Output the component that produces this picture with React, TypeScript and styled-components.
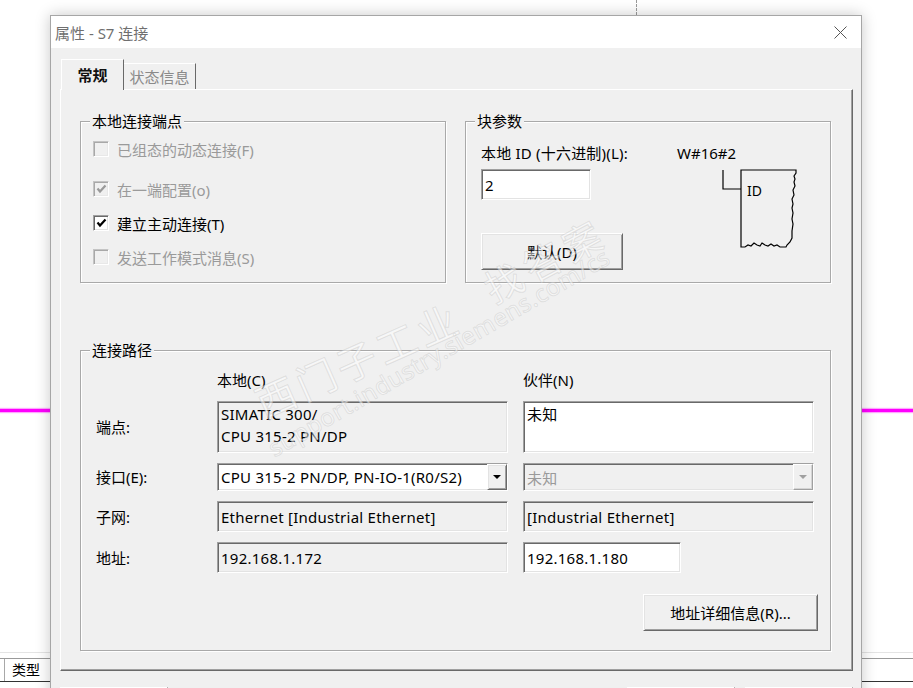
import React from 'react';
import styled, { createGlobalStyle, css } from 'styled-components';

const GlobalStyle = createGlobalStyle`
  html, body { margin: 0; padding: 0; background: #fff; }
  body {
    font-family: "Noto Sans", "Noto Sans CJK SC", sans-serif;
    font-size: 15px;
    color: #000;
  }
  * { box-sizing: border-box; }
`;

// classic win32 3d edges
const sunken = css`
  border: 1px solid;
  border-color: #a0a0a0 #fff #fff #a0a0a0;
  box-shadow: inset 1px 1px 0 #696969, inset -1px -1px 0 #e3e3e3;
`;

const raised = css`
  border: 1px solid;
  border-color: #fff #696969 #696969 #fff;
  box-shadow: inset 1px 1px 0 #e3e3e3, inset -1px -1px 0 #a0a0a0;
`;

const Page = styled.div`
  position: relative;
  width: 913px;
  height: 688px;
  overflow: hidden;
  background: #fff;
`;

/* ---------- what lies behind the dialog ---------- */

const Backdrop = styled.div`
  display: flex;
  flex-direction: column;
`;

const Tick = styled.div`
  margin-left: 636px;
  height: 15px;
  border-left: 1px dashed #9a9a9a;
`;

const Wire = styled.div`
  margin-top: 394px;
  height: 3px;
  background: #ff00ff;
  box-shadow: 0 0 1px 1px rgba(255, 0, 255, 0.35);
`;

const BgTable = styled.div`
  margin-top: 240px;
  border-top: 1px solid #e4e4e4;
`;

const BgHeader = styled.div`
  margin-top: 5px;
  height: 24px;
  border-top: 1px solid #9a9a9a;
  border-bottom: 1px solid #333;
  display: flex;
`;

const BgCell = styled.div`
  margin-left: 4px;
  padding-left: 7px;
  border-left: 1px solid #a8a8a8;
  font-size: 14px;
  line-height: 22px;
`;

/* ---------- dialog window ---------- */

const Dialog = styled.div`
  position: absolute;
  left: 50px;
  top: 15px;
  width: 812px;
  height: 730px;
  background: #f0f0f0;
  border: 1px solid #a6a6a6;
  box-shadow: 0 0 14px rgba(0, 0, 0, 0.22);
  display: flex;
  flex-direction: column;
`;

const TitleBar = styled.div`
  height: 32px;
  background: #fff;
  display: flex;
  align-items: center;
  justify-content: space-between;
  padding: 0 14px 0 4px;
`;

const Title = styled.span`
  color: #6f6f6f;
  font-size: 15px;
`;

const Body = styled.div`
  padding: 11px 8px 0 9px;
  display: flex;
  flex-direction: column;
`;

const Tabs = styled.div`
  display: flex;
  align-items: flex-end;
  height: 30px;
  padding-left: 1px;
`;

const Tab = styled.div<{ $active?: boolean }>`
  position: relative;
  display: flex;
  align-items: center;
  justify-content: center;
  background: #f0f0f0;
  border: 1px solid;
  border-color: #fff #696969 transparent #fff;
  border-bottom: none;
  ${(p) =>
    p.$active
      ? css`
          width: 63px;
          height: 31px;
          margin-bottom: -1px;
          z-index: 1;
          font-weight: 700;
          color: #111;
          padding-bottom: 1px;
        `
      : css`
          width: 73px;
          height: 26px;
          margin-left: -1px;
          color: #8a8a8a;
        `}
`;

const TabPanel = styled.div`
  height: 582px;
  border: 1px solid;
  border-color: #fff #696969 #696969 #fff;
  box-shadow: inset -1px -1px 0 #a0a0a0;
  padding: 31px 21px 0 19px;
  display: flex;
  flex-direction: column;
`;

const TopRow = styled.div`
  display: flex;
  gap: 19px;
`;

const GroupBox = styled.div<{ $w?: number; $h: number; $top?: number }>`
  position: relative;
  width: ${(p) => (p.$w ? `${p.$w}px` : 'auto')};
  height: ${(p) => p.$h}px;
  margin-top: ${(p) => p.$top ?? 0}px;
  border: 1px solid #a9a9a9;
  box-shadow: inset 1px 1px 0 #fff, 1px 1px 0 #fff;
`;

const Legend = styled.span`
  position: absolute;
  top: -11px;
  left: 9px;
  padding: 0 2px;
  background: #f0f0f0;
  line-height: 20px;
`;

/* ---------- local endpoint ---------- */

const CheckList = styled.div`
  display: flex;
  flex-direction: column;
  gap: 14px;
  padding: 17px 0 0 12px;
`;

const CheckRow = styled.label<{ $enabled: boolean; $first?: boolean }>`
  display: flex;
  align-items: center;
  gap: 8px;
  height: 20px;
  color: ${(p) => (p.$enabled ? '#000' : '#9a9a9a')};
  margin-bottom: ${(p) => (p.$first ? 6 : 0)}px;
`;

const Box = styled.span<{ $enabled: boolean }>`
  width: 16px;
  height: 16px;
  flex: none;
  display: flex;
  align-items: center;
  justify-content: center;
  border: 1px solid;
  border-color: ${(p) => (p.$enabled ? '#a0a0a0 #fff #fff #a0a0a0' : '#c4c4c4 #fff #fff #c4c4c4')};
  box-shadow: ${(p) =>
    p.$enabled
      ? 'inset 1px 1px 0 #696969, inset -1px -1px 0 #e3e3e3'
      : 'inset 1px 1px 0 #a8a8a8, inset -1px -1px 0 #e8e8e8'};
  background: ${(p) => (p.$enabled ? '#fff' : '#f0f0f0')};
`;

const Check = ({ color }: { color: string }) => (
  <svg width="11" height="10" viewBox="0 0 11 10">
    <polyline points="1.5,4.5 4,7.5 9.5,1.5" fill="none" stroke={color} strokeWidth="2.2" />
  </svg>
);

/* ---------- block parameters ---------- */

const ParamBody = styled.div`
  padding: 21px 0 0 15px;
  display: flex;
  flex-direction: column;
`;

const ParamHead = styled.div`
  display: flex;
  line-height: 20px;
`;

const ParamLabel = styled.span`
  width: 196px;
  letter-spacing: 0.2px;
`;

const ParamMain = styled.div`
  display: flex;
  margin-top: 6px;
`;

const ParamCol = styled.div`
  display: flex;
  flex-direction: column;
  gap: 33px;
  width: 142px;
`;

const TextInput = styled.div<{ $w: number }>`
  ${sunken};
  width: ${(p) => p.$w}px;
  height: 31px;
  background: #fff;
  display: flex;
  align-items: center;
  padding-left: 3px;
`;

const Button = styled.div<{ $w: number; $h: number }>`
  ${raised};
  width: ${(p) => p.$w}px;
  height: ${(p) => p.$h}px;
  background: #f0f0f0;
  display: flex;
  align-items: center;
  justify-content: center;
  flex: none;
`;

const Diagram = styled.svg`
  margin: -1px 0 0 97px;
`;

/* ---------- connection path ---------- */

const PathGrid = styled.div`
  display: grid;
  grid-template-columns: 106px 291px 291px;
  grid-template-rows: 21px 52px 28px 31px 31px;
  column-gap: 15px;
  row-gap: 10px;
  padding: 19px 0 0 15px;
  align-items: center;
`;

const ColHead = styled.span`
  line-height: 21px;
`;

const RowLabel = styled.span`
  line-height: 20px;
`;

const Field = styled.div<{ $white?: boolean; $muted?: boolean; $w?: number }>`
  ${sunken};
  height: 100%;
  width: ${(p) => (p.$w ? `${p.$w}px` : 'auto')};
  background: ${(p) => (p.$white ? '#fff' : '#f0f0f0')};
  color: ${(p) => (p.$muted ? '#9a9a9a' : '#000')};
  display: flex;
  align-items: center;
  padding-left: 3px;
  white-space: nowrap;
  letter-spacing: 0.25px;
`;

const MultiField = styled(Field)`
  flex-direction: column;
  align-items: flex-start;
  justify-content: flex-start;
  padding-top: 1px;
  line-height: 22px;
`;

const ComboText = styled.span`
  flex: 1;
`;

const DropButton = styled.span<{ $muted?: boolean }>`
  ${raised};
  width: 20px;
  height: 100%;
  flex: none;
  display: flex;
  align-items: center;
  justify-content: center;
  background: #f0f0f0;
  ${(p) => p.$muted && 'border-color: #fff #a0a0a0 #a0a0a0 #fff; box-shadow: inset -1px -1px 0 #d4d4d4;'}
  &::after {
    content: '';
    border-left: 4px solid transparent;
    border-right: 4px solid transparent;
    border-top: 4px solid ${(p) => (p.$muted ? '#a0a0a0' : '#000')};
  }
`;

const DetailRow = styled.div`
  display: flex;
  justify-content: flex-end;
  padding-right: 12px;
  margin-top: 21px;
`;

const DialogButtons = styled.div`
  display: flex;
  gap: 10px;
  margin-top: 16px;
`;

const Spacer = styled.div`
  flex: 1;
`;

/* ---------- watermark over the dialog ---------- */

const Mark = styled.span<{ $size: number; $spacing: number }>`
  position: absolute;
  pointer-events: none;
  white-space: nowrap;
  font-size: ${(p) => p.$size}px;
  line-height: 1;
  letter-spacing: ${(p) => p.$spacing}px;
  color: rgba(255, 255, 255, 0.5);
  -webkit-text-stroke: 1px rgba(180, 180, 180, 0.32);
  transform-origin: 0 100%;
`;

const checks = [
  { text: '已组态的动态连接(F)', enabled: false, checked: false },
  { text: '在一端配置(o)', enabled: false, checked: true },
  { text: '建立主动连接(T)', enabled: true, checked: true },
  { text: '发送工作模式消息(S)', enabled: false, checked: false },
];

export default function App() {
  return (
    <>
      <GlobalStyle />
      <Page>
        <Backdrop>
          <Tick />
          <Wire />
          <BgTable>
            <BgHeader>
              <BgCell>类型</BgCell>
            </BgHeader>
          </BgTable>
        </Backdrop>

        <Dialog>
          <TitleBar>
            <Title>属性 - S7 连接</Title>
            <svg width="13" height="13" viewBox="0 0 13 13">
              <path d="M0.5 0.5 L12.5 12.5 M12.5 0.5 L0.5 12.5" stroke="#555" strokeWidth="1" />
            </svg>
          </TitleBar>

          <Body>
            <Tabs>
              <Tab $active>常规</Tab>
              <Tab>状态信息</Tab>
            </Tabs>

            <TabPanel>
              <TopRow>
                <GroupBox $w={366} $h={162}>
                  <Legend>本地连接端点</Legend>
                  <CheckList>
                    {checks.map((c, i) => (
                      <CheckRow key={c.text} $enabled={c.enabled} $first={i === 0}>
                        <Box $enabled={c.enabled}>
                          {c.checked && <Check color={c.enabled ? '#000' : '#9a9a9a'} />}
                        </Box>
                        {c.text}
                      </CheckRow>
                    ))}
                  </CheckList>
                </GroupBox>

                <GroupBox $w={366} $h={162}>
                  <Legend>块参数</Legend>
                  <ParamBody>
                    <ParamHead>
                      <ParamLabel>本地 ID (十六进制)(L):</ParamLabel>
                      <span>W#16#2</span>
                    </ParamHead>
                    <ParamMain>
                      <ParamCol>
                        <TextInput $w={110}>2</TextInput>
                        <Button $w={142} $h={37}>默认(D)</Button>
                      </ParamCol>
                      <Diagram width="80" height="82" viewBox="0 0 80 82">
                        <path d="M3 2 V21 H21" fill="none" stroke="#000" strokeWidth="1.2" />
                        <path
                          d="M21 2 H76 V5 L74 8 L75 11 L74 14 L75 18 L73 22 L74 27 L72 31 L73 36 L72 40 L73 45 L72 51 L73 56 L72 63 L72 70 L70 74 L67 77 L66 79 H60 L57 77 L54 78 L51 76 L48 78 L45 77 L42 75 L40 78 L37 77 L34 75 L31 78 L28 77 L25 79 H21 Z"
                          fill="none"
                          stroke="#000"
                          strokeWidth="1.2"
                        />
                        <text x="27" y="28" fontSize="14" fontFamily="Noto Sans, sans-serif">
                          ID
                        </text>
                      </Diagram>
                    </ParamMain>
                  </ParamBody>
                </GroupBox>
              </TopRow>

              <GroupBox $h={301} $top={67}>
                <Legend>连接路径</Legend>
                <PathGrid>
                  <span />
                  <ColHead>本地(C)</ColHead>
                  <ColHead>伙伴(N)</ColHead>

                  <RowLabel>端点:</RowLabel>
                  <MultiField>
                    <span>SIMATIC 300/</span>
                    <span>CPU 315-2 PN/DP</span>
                  </MultiField>
                  <MultiField $white>
                    <span>未知</span>
                  </MultiField>

                  <RowLabel>接口(E):</RowLabel>
                  <Field $white>
                    <ComboText>CPU 315-2 PN/DP, PN-IO-1(R0/S2)</ComboText>
                    <DropButton />
                  </Field>
                  <Field $muted>
                    <ComboText>未知</ComboText>
                    <DropButton $muted />
                  </Field>

                  <RowLabel>子网:</RowLabel>
                  <Field>Ethernet [Industrial Ethernet]</Field>
                  <Field>[Industrial Ethernet]</Field>

                  <RowLabel>地址:</RowLabel>
                  <Field>192.168.1.172</Field>
                  <Field $white $w={158}>192.168.1.180</Field>
                </PathGrid>
                <DetailRow>
                  <Button $w={175} $h={37}>地址详细信息(R)...</Button>
                </DetailRow>
              </GroupBox>
            </TabPanel>

            <DialogButtons>
              <Button $w={108} $h={30} />
              <Spacer />
              <Button $w={108} $h={30} />
              <Button $w={108} $h={30} />
            </DialogButtons>
          </Body>
        </Dialog>

        <Mark $size={40} $spacing={4} style={{ left: 266, top: 384, transform: 'rotate(-24deg)' }}>
          西门子工业
        </Mark>
        <Mark $size={24} $spacing={0.5} style={{ left: 276, top: 436, transform: 'rotate(-30deg)' }}>
          support.industry.siemens.com/cs
        </Mark>
        <Mark $size={38} $spacing={6} style={{ left: 496, top: 270, transform: 'rotate(-28deg)' }}>
          找答案
        </Mark>
      </Page>
    </>
  );
}
